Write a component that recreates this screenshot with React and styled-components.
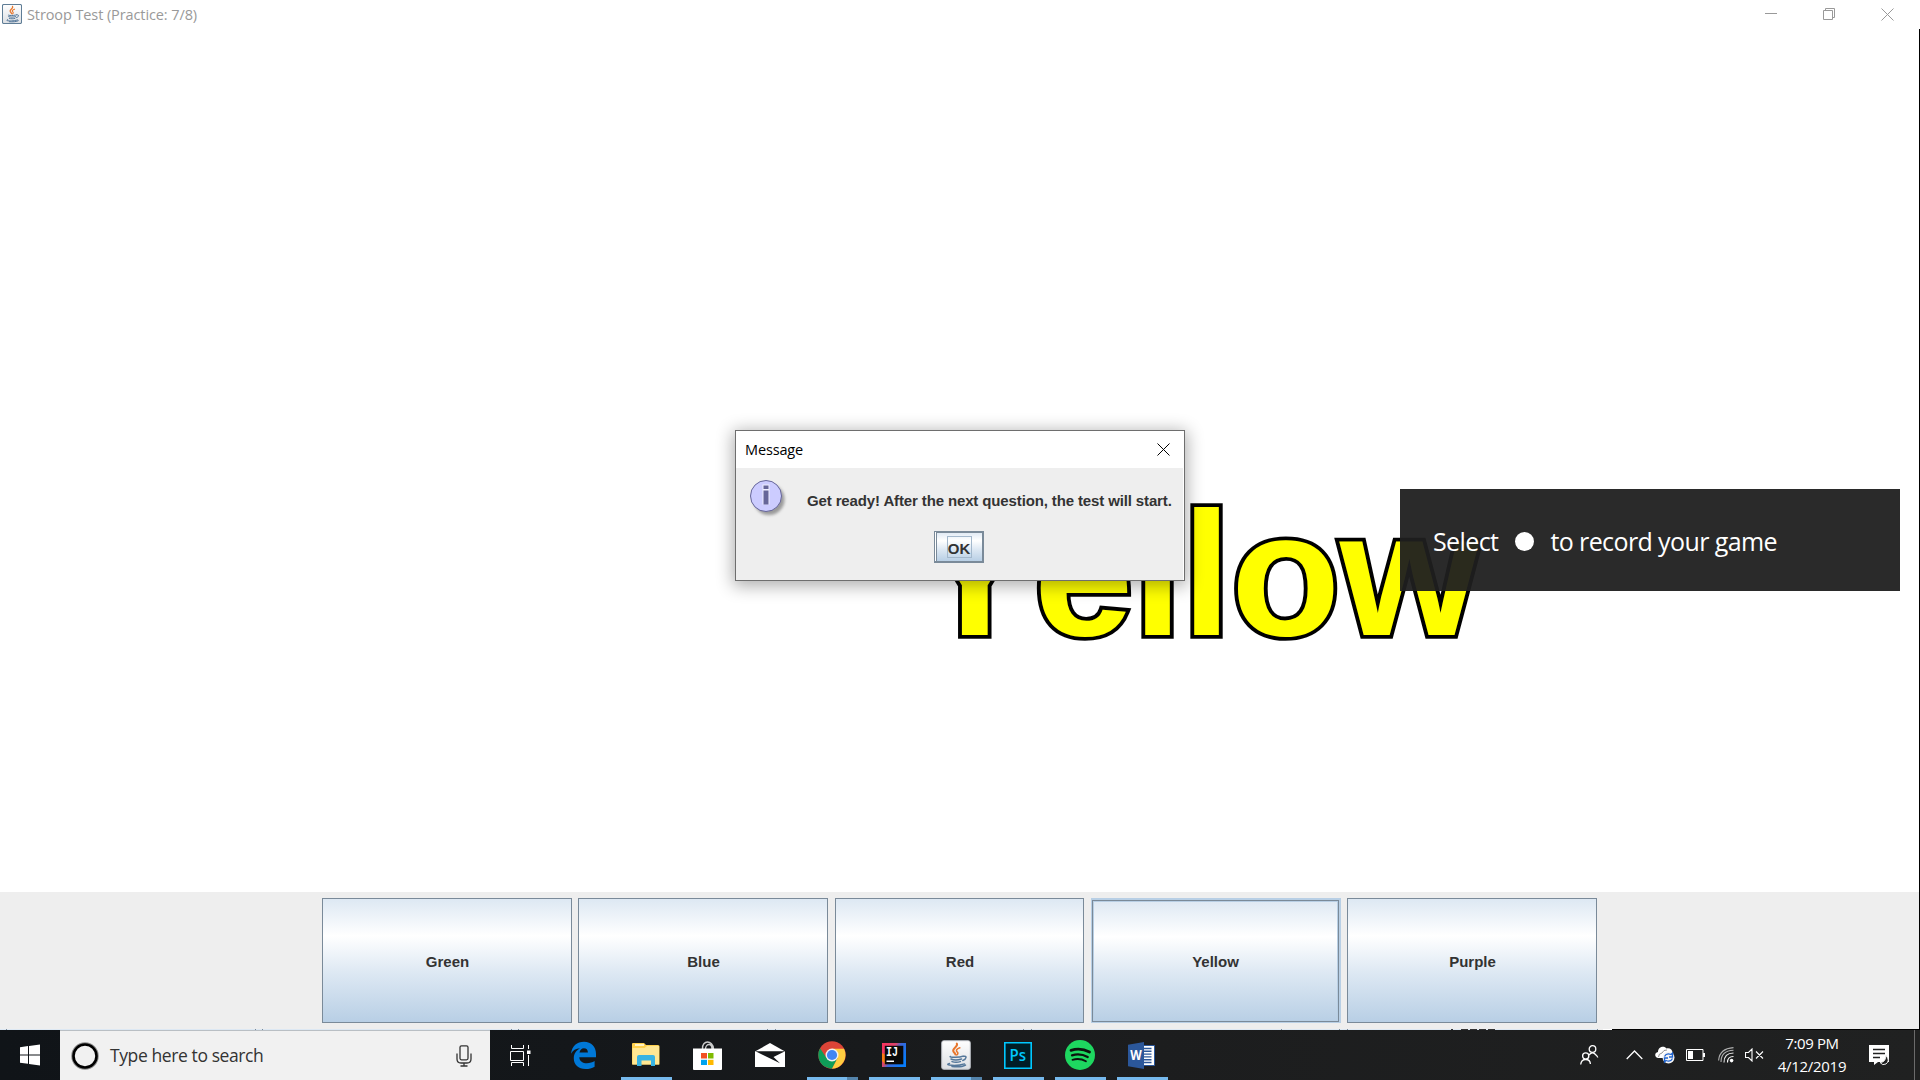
import React from 'react';
import styled, { createGlobalStyle } from 'styled-components';

const Global = createGlobalStyle`
  * { box-sizing: border-box; }
  html, body { margin: 0; padding: 0; }
  body { width: 1920px; height: 1080px; overflow: hidden; background: #fff; }
  svg { display: block; flex: none; }
`;

const UI = `'Open Sans', 'Noto Sans', sans-serif`;
const SWING = `'Liberation Sans', Arial, sans-serif`;

const Screen = styled.div`
  position: relative;
  width: 1920px;
  height: 1080px;
  display: flex;
  flex-direction: column;
  overflow: hidden;
  font-family: ${UI};
`;

const Label = styled.span`
  white-space: pre;
  font-family: ${UI};
  font-size: ${(p) => p.$size}px;
  line-height: 1.2;
  letter-spacing: ${(p) => p.$track || 0}px;
  color: ${(p) => p.$color || '#000'};
`;

const TitleBar = styled.header`
  height: 29px;
  flex: none;
  display: flex;
  align-items: flex-start;
  padding: 4px 26px 0 2px;
  background: #fff;
`;
const AppTitle = styled(Label)`
  margin: 2px auto 0 5px;
`;
const WindowControls = styled.div`
  display: flex;
  gap: 46px;
  padding-top: 4px;
`;

const Canvas = styled.main`
  height: 863px;
  flex: none;
  display: flex;
  align-items: flex-start;
  padding: 444px 0 0 915px;
  border-right: 1px solid #000;
`;
const StroopWord = styled.div`
  font: bold 179px/200px ${SWING};
  font-kerning: none;
  letter-spacing: -0.6px;
  color: #ff0;
  -webkit-text-stroke: 7.8px #000;
  paint-order: stroke fill;
  transform: scaleY(0.985);
  transform-origin: 0 162px;
`;

const AnswerBar = styled.div`
  height: 138px;
  flex: none;
  display: flex;
  flex-direction: column;
  background: #eee;
  border-right: 1px solid #000;
`;
const Answers = styled.div`
  height: 137px;
  display: grid;
  grid-template-columns: 250px 251px 250px 250px 250px;
  column-gap: 6px;
  padding: 6px 0 6px 322px;
`;
const gradient = 'linear-gradient(#dde8f3 0%, #fff 30%, #dde8f3 60%, #b8cfe5 100%)';
const Answer = styled.button`
  width: ${(p) => p.$width || 250}px;
  height: 125px;
  padding: 2px 0 0 1px;
  border: 1px solid #7a8a99;
  background: ${gradient};
  color: #333;
  font: bold 15px/18px ${SWING};
  ${(p) =>
    p.$hover &&
    `padding-top: 1px; padding-left: 0; border-color: #b8cfe5; border-width: 2px 2px 1px 1px; box-shadow: inset 0 0 0 1px #7a8a99, inset 0 0 0 2px #b8cfe5;`}
`;
const Seam = styled.div`
  height: 1px;
  flex: none;
`;

const Dialog = styled.section`
  position: absolute;
  left: 735px;
  top: 430px;
  width: 450px;
  height: 151px;
  display: flex;
  flex-direction: column;
  border: 1px solid #6e6e6e;
  background: #eee;
  box-shadow: 0 3px 16px 2px rgba(0, 0, 0, 0.32);
`;
const DialogBar = styled.div`
  height: 37px;
  display: flex;
  align-items: center;
  justify-content: space-between;
  padding: 0 14px 0 9px;
  background: #fff;
`;
const DialogBody = styled.div`
  flex: 1;
  display: flex;
  flex-direction: column;
  border-right: 1px solid #fff;
`;
const MessageRow = styled.div`
  display: flex;
  align-items: flex-start;
  height: 63px;
  padding: 11px 0 0 13px;
`;
const Message = styled.p`
  margin: 13px 0 0 22px;
  font: bold 15px/18px ${SWING};
  letter-spacing: ${(p) => p.$track}px;
  color: #333;
  white-space: pre;
`;
const OkButton = styled.button`
  width: 50px;
  height: 32px;
  margin-left: 198px;
  padding: 0 0 0 1px;
  display: flex;
  align-items: center;
  justify-content: center;
  border: solid #7a8a99;
  border-width: 1px 2px 2px 1px;
  background: linear-gradient(#dde8f3, #fff 30%, #dde8f3 60%, #b8cfe5);
  box-shadow: inset 1px 0 0 #fff, inset 2px 1px 0 #7a8a99;
`;
const OkLabel = styled.span`
  width: 25px;
  height: 22px;
  border: 1px solid #a3b8cc;
  font: bold 15px/23px ${SWING};
  color: #333;
  text-align: center;
`;

const Toast = styled.aside`
  position: absolute;
  left: 1400px;
  top: 489px;
  width: 500px;
  height: 102px;
  padding: 2px 0 0 33px;
  display: flex;
  align-items: center;
  background: rgba(31, 31, 31, 0.95);
`;
const RecordDot = styled.i`
  width: 19px;
  height: 19px;
  margin: 0 16px 0 17px;
  border-radius: 50%;
  background: #fff;
`;

const Taskbar = styled.footer`
  height: 50px;
  flex: none;
  display: flex;
  background: linear-gradient(90deg, #101418 0, #14171a 30%, #1c1d1e 60%, #202121 100%);
`;
const Start = styled.div`
  width: 60px;
  display: flex;
  align-items: center;
  justify-content: center;
`;
const Search = styled.div`
  width: 430px;
  display: flex;
  align-items: center;
  padding: 0 18px 0 11px;
  border-top: 1px solid #b9bfc4;
  background: #f1f1f1;
`;
const SearchText = styled(Label)`
  margin: -1px auto 0 11px;
`;
const TaskView = styled.div`
  width: 63px;
  display: flex;
  align-items: center;
  justify-content: center;
  padding-right: 3px;
`;
const Task = styled.div`
  width: 62px;
  display: flex;
  flex-direction: column;
  align-items: center;
`;
const TaskIcon = styled.div`
  height: 47px;
  display: flex;
  align-items: center;
  padding-top: 3px;
  padding-right: ${(p) => p.$nudge || 0}px;
`;
const Underline = styled.div`
  width: 51px;
  height: 3px;
  background: ${(p) => (p.$split ? 'linear-gradient(90deg, #76b9ed 40px, #5484ab 40px)' : '#76b9ed')};
`;
const Tray = styled.div`
  margin-left: auto;
  display: flex;
  align-items: center;
`;
const TrayIcon = styled.div`
  margin-right: ${(p) => p.$after}px;
`;
const Clock = styled.div`
  width: 70px;
  display: flex;
  flex-direction: column;
  align-items: center;
  gap: 5px;
  margin: -2px 22px 0 -1px;
`;
const ShowDesktop = styled.div`
  width: 6px;
  height: 50px;
  border-left: 1px solid #6b6b6b;
`;

const CupPaths = () => (
  <g fill="none" strokeLinecap="round">
    <path d="M15.800 3.500c2 3.200-5.200 4.600-3.400 8 .6 1 1.700 1.700 2 3" stroke="#e8762c" strokeWidth="2" />
    <path d="M18.800 7.700c-3.600 1.300-4.300 2.800-2.300 4.600.8.900.2 1.900-.7 2.600" stroke="#e8762c" strokeWidth="1.600" />
    <path d="M9.500 16.500c-2.500.8 9 1.400 12.500-.3M10 19c2.500 1 7.500.9 10.500 0M11 21.600c2.400.9 6 .8 8.400 0M22.500 16.200c3.800-.6 3 3.300-.7 4.200M8.500 23.500c-6.500 1.800 7.500 3 15 .4M11 26.600c5 .5 11 0 13.500-1.500" stroke="#54779a" strokeWidth="1.500" />
  </g>
);
const JavaIcon = ({ size }) => (
  <svg width={size} height={size} viewBox="0 0 30 30">
    <defs>
      <linearGradient id="jg" x2="0" y2="1"><stop stopColor="#fff" /><stop offset="1" stopColor="#dcdfe3" /></linearGradient>
    </defs>
    <rect x=".7" y=".7" width="28.600" height="28.600" rx="2" fill="url(#jg)" stroke={size < 25 ? '#5f7d96' : '#b8bcc2'} strokeWidth={size < 25 ? 1.600 : 1} />
    <CupPaths />
  </svg>
);
const Minimize = () => <svg width="12" height="12"><path d="M0 5.500h12" stroke="#999" /></svg>;
const Restore = () => (
  <svg width="12" height="12" fill="none" stroke="#999"><path d="M.5 2.500h9v9h-9zM2.500 2.500v-2h9v9h-2" /></svg>
);
const Close = ({ color }) => (
  <svg width="13" height="13" fill="none" stroke={color} strokeWidth="1"><path d="M.5.500l12 12M12.500.500l-12 12" /></svg>
);
const InfoIcon = () => (
  <svg width="36" height="38" style={{ overflow: 'visible' }}>
    <defs>
      <filter id="sh" x="-30%" y="-30%" width="160%" height="160%"><feGaussianBlur stdDeviation="1.600" /></filter>
    </defs>
    <circle cx="20" cy="20.500" r="15.500" fill="#777" opacity=".7" filter="url(#sh)" />
    <circle cx="17" cy="17" r="15.500" fill="#ccf" stroke="#669" />
    <path d="M13.500 5.500h7v20h-7z" fill="#eef" />
    <path d="M14.500 6.500h5v3.500h-5zM14.500 11.500h5v14h-5z" fill="#669" />
  </svg>
);
const WindowsLogo = () => (
  <svg width="20" height="22" viewBox="0 0 20 22" fill="#fff">
    <path d="M0 3.200l8-1.100v8.300H0zM9 1.900L20 .4v10H9zM0 11.400h8v8.400l-8-1.100zM9 11.400h11v10.200L9 20z" />
  </svg>
);
const Cortana = () => (
  <svg width="28" height="30" viewBox="0 0 28 30" fill="none">
    <circle cx="14" cy="15" r="12.500" stroke="#8b8b8b" strokeWidth="2.500" />
    <circle cx="14" cy="15" r="11.500" stroke="#000" strokeWidth="2.600" />
  </svg>
);
const Mic = () => (
  <svg width="16" height="22" viewBox="0 0 16 22" fill="none" stroke="#333" strokeWidth="1.300">
    <rect x="4" y=".8" width="8" height="14" rx="1.500" />
    <path d="M1 8.500v5.500q0 4 4 4h6q4 0 4-4V8.500M8 18v3M4.500 21h7" />
  </svg>
);
const TaskViewIcon = () => (
  <svg width="21" height="22" viewBox="0 0 21 22" fill="none" stroke="#fff">
    <path d="M1.500 1v3.500h12V1M.5 7.500h13v9h-13zM1.500 22v-3.500h12V22M18.500 1v4M18.500 11v11" />
    <path d="M17 6.500h3.500v3.500H17z" fill="#fff" stroke="none" />
  </svg>
);
const Edge = () => (
  <svg width="25" height="28" viewBox="0 0 25 28">
    <path fill="#0078d7" d="M0 12.800C1 5 6 .8 13 .8c7.500 0 12 5.200 12 12v3.400H8.300c.2 4 3.600 6 7.600 6 3 0 5.500-.8 7.700-2.100v5.600C21 27.200 18 28 14.600 28 7.300 28 2.800 23.800 2.800 17.500c0-4.400 2.200-8 6.200-10.200C4.800 7.500 1.800 9.500 0 12.800zM8.500 11.500h8.400c0-2.800-1.500-4.300-4-4.300-2.300 0-3.900 1.600-4.400 4.300z" />
  </svg>
);
const Explorer = () => (
  <svg width="28" height="24" viewBox="0 0 28 24">
    <path d="M0 1q0-1 1-1h11l2 2h12q1.500 0 1.500 1.500V21.500H0z" fill="#ffd04c" />
    <path d="M3 1h9v2H3z" fill="#fff3c4" />
    <path d="M.5 5h12l2.500-2H27v18.500H.5z" fill="#ffe793" />
    <path d="M5 23V14q0-2 2-2h14q2 0 2 2v9h-4v-5.500H9.500V23z" fill="#38b3e2" />
  </svg>
);
const Store = () => (
  <svg width="29" height="29" viewBox="0 0 29 29">
    <path d="M9.500 8C9 3.500 12 1 14.500 1s6 2.500 6 7M12.500 8c0-3 2-4.500 3.500-4.500S19 5 19 8" fill="none" stroke="#ccc" strokeWidth="1.400" />
    <path d="M0 7.500h29V28q0 1-1 1H1q-1 0-1-1z" fill="#fff" />
    <path d="M8 12h6v5.500H8z" fill="#f25022" /><path d="M15 12h5.500v5.500H15z" fill="#7fba00" />
    <path d="M8 18.800h6V24H8z" fill="#00a4ef" /><path d="M15 18.800h5.500V24H15z" fill="#ffb900" />
  </svg>
);
const Mail = () => (
  <svg width="30" height="24" viewBox="0 0 30 24">
    <path d="M0 8.500L15 0l15 8.500V24H0z" fill="#fff" />
    <path d="M.5 8.300H30L18.500 14l6.500 6.200L.5 8.300z" fill="#16181a" />
  </svg>
);
const Chrome = () => (
  <svg width="28" height="28" viewBox="0 0 28 28">
    <circle cx="14" cy="14" r="13.700" fill="#db4437" />
    <path d="M2.100 7.200A13.700 13.700 0 0 0 14 27.700l5.500-10.500L8.500 17z" fill="#0f9d58" />
    <path d="M26 7.800H14l5.500 9.400L14 27.700A13.700 13.700 0 0 0 26 7.800z" fill="#ffcd40" />
    <circle cx="14" cy="14" r="6.500" fill="#f1f1f1" /><circle cx="14" cy="14" r="5.100" fill="#4285f4" />
  </svg>
);
const IconText = styled.text`
  font-family: ${(p) => p.$font};
  font-size: ${(p) => p.$size}px;
  font-weight: ${(p) => p.$weight};
  fill: ${(p) => p.$fill};
`;
const IntelliJ = () => (
  <svg width="24" height="24" viewBox="0 0 24 24">
    <defs>
      <linearGradient id="ij" x2="1" y2=".6"><stop stopColor="#fe315d" /><stop offset=".45" stopColor="#d8456c" /><stop offset=".6" stopColor="#3c66d8" /><stop offset="1" stopColor="#087cfa" /></linearGradient>
    </defs>
    <path d="M0 0h24v24H0z" fill="url(#ij)" />
    <path d="M0 10l4 2v10l-4-4z" fill="#f97a12" />
    <path d="M2.800 2.800h18.500v18.500H2.800z" fill="#090909" />
    <IconText x="4" y="13" $font="'Liberation Mono', monospace" $size={12} $weight="bold" $fill="#fff" textLength="12" lengthAdjust="spacingAndGlyphs">IJ</IconText>
    <path d="M4.500 17.500h7.500v1.500H4.500z" fill="#fff" />
  </svg>
);
const Photoshop = () => (
  <svg width="28" height="27" viewBox="0 0 28 27">
    <path d="M.8.800h26.400v25.400H.8z" fill="#001d26" stroke="#00c8ff" strokeWidth="1.600" />
    <IconText x="5.500" y="18.500" $font="'Open Sans', sans-serif" $size={17} $weight={600} $fill="#00c8ff" textLength="16.500" lengthAdjust="spacingAndGlyphs">Ps</IconText>
  </svg>
);
const Spotify = () => (
  <svg width="30" height="30" viewBox="0 0 30 30">
    <circle cx="15" cy="15" r="15" fill="#1ed760" />
    <g fill="none" stroke="#0c120e" strokeLinecap="round">
      <path d="M6 10.300c6.500-1.900 13-1.200 18.500 1.800" strokeWidth="2.800" />
      <path d="M7 15.300c5.500-1.600 11-.9 15.700 1.700" strokeWidth="2.300" />
      <path d="M7.500 19.800c4.700-1.300 9.400-.8 13.400 1.500" strokeWidth="1.900" />
    </g>
  </svg>
);
const Word = () => (
  <svg width="27" height="27" viewBox="0 0 27 27">
    <path d="M15 3.500h11.500v20H15z" fill="#fff" stroke="#2b579a" />
    <path d="M16 6.500h7.500M16 9.300h7.500M16 12.100h7.500M16 14.900h7.500M16 17.700h7.500M16 20.500h7.500" stroke="#2b579a" strokeWidth="1.400" />
    <path d="M0 2.800L16 0v27L0 24.200z" fill="#2b579a" />
    <IconText x="2.200" y="18.300" $font="'Open Sans', sans-serif" $size={13.500} $weight="bold" $fill="#fff" textLength="11.500" lengthAdjust="spacingAndGlyphs">W</IconText>
  </svg>
);
const People = () => (
  <svg width="19" height="20" viewBox="0 0 19 20" fill="none" stroke="#fff" strokeWidth="1.300">
    <circle cx="12.500" cy="4" r="3.300" /><path d="M9 10q3.500-4.500 7 0 1.500 1.200 1.700 2.500" />
    <circle cx="5.700" cy="11" r="3.100" /><path d="M.7 19.500q.5-5 5-5t4.700 4.500" />
  </svg>
);
const Chevron = () => <svg width="17" height="10" fill="none" stroke="#fff" strokeWidth="1.300"><path d="M.7 9l7.800-8 7.800 8" /></svg>;
const Cloud = () => (
  <svg width="20" height="18" viewBox="0 0 20 18">
    <path d="M3.500 12C-.8 12-.8 6.500 3 6 3 1 9-.8 11.500 2.500 15 1.500 18 4 17.500 8v4z" fill="#fff" />
    <path d="M3.500 11q0-3.500 3.500-4 1.500-3.500 5-3" fill="none" stroke="#777" strokeWidth=".8" />
    <circle cx="13.500" cy="11.500" r="6" fill="#f4f4f4" />
    <path d="M9.500 10.500q2-4 6.500-2l1.500-1.500v4H14M17.500 12.500q-2 4-6.500 2l-1.500 1.500v-4H13" fill="none" stroke="#1e63d0" strokeWidth="1.300" />
  </svg>
);
const Battery = () => (
  <svg width="19" height="12"><path d="M.5.500h16.500v11H.5z" fill="none" stroke="#fff" /><path d="M2 2h5v8H2zM17 4h2v4h-2z" fill="#fff" /></svg>
);
const Wifi = () => (
  <svg width="16" height="16" fill="none" stroke="#fff" strokeWidth="1.100">
    <circle cx="13.600" cy="13.600" r="1.800" fill="#fff" stroke="none" />
    <path d="M9.500 15.500q0-6 6-6" /><path d="M6 15.500Q6 6 15.500 6" strokeOpacity=".9" />
    <path d="M3 15Q3 3.500 15.500 3.200M.6 13.500Q1.500 1.500 15.500.6" strokeOpacity=".65" />
  </svg>
);
const Mute = () => (
  <svg width="19" height="14" fill="none" stroke="#fff"><path d="M.5 4.500h3L7 1v12L3.500 9.500h-3zM11 3.500l7 7M18 3.500l-7 7" strokeWidth="1.100" /></svg>
);
const Notifications = () => (
  <svg width="21" height="21" viewBox="0 0 21 21">
    <path d="M0 0h20v17H9l-4 3v-3H0z" fill="#fff" />
    <path d="M4 4.500h12M4 8.500h12M4 12.500h7" stroke="#202121" strokeWidth="1.300" />
    <path d="M17 10.500q4.500 5 0 8.500-3.500 2-6-1.500 5.500 0 6-7z" fill="#202121" stroke="#eee" />
  </svg>
);

const tasks = [
  { name: 'edge', icon: <Edge />, nudge: 2 },
  { name: 'explorer', icon: <Explorer />, open: true },
  { name: 'store', icon: <Store />, nudge: 2 },
  { name: 'mail', icon: <Mail /> },
  { name: 'chrome', icon: <Chrome />, open: true, split: true },
  { name: 'intellij', icon: <IntelliJ />, open: true },
  { name: 'java', icon: <JavaIcon size={30} />, open: true, split: true },
  { name: 'photoshop', icon: <Photoshop />, open: true },
  { name: 'spotify', icon: <Spotify />, open: true },
  { name: 'word', icon: <Word />, open: true, nudge: 1 },
];
const answers = [
  { name: 'Green' },
  { name: 'Blue' },
  { name: 'Red', width: 249 },
  { name: 'Yellow', hover: true },
  { name: 'Purple' },
];

const SeamLine = () => (
  <Seam>
    <svg width="1920" height="1">
      <path d="M0 .5h1597" stroke="#dde8f3" />
      <path d="M1603 .5h9" stroke="#fff" />
      <path d="M1612 .5h308" stroke="#000" />
      {[6, 255, 262, 511, 518, 767, 775, 1023, 1031, 1281, 1339, 1347, 1597].map((x) => (
        <path key={x} d={`M${x} .5h1`} stroke="#7a8a99" />
      ))}
      <path d="M1451 .5h2M1461 .5h7M1470 .5h7M1479 .5h7M1488 .5h7" stroke="#333" />
    </svg>
  </Seam>
);

export default function App() {
  return (
    <Screen>
      <Global />
      <TitleBar>
        <JavaIcon size={20} />
        <AppTitle $size={14.5} $track={-0.1} $color="#999">Stroop Test (Practice: 7/8)</AppTitle>
        <WindowControls><Minimize /><Restore /><Close color="#999" /></WindowControls>
      </TitleBar>
      <Canvas>
        <StroopWord>Yellow</StroopWord>
      </Canvas>
      <AnswerBar>
        <Answers>
          {answers.map((a) => (
            <Answer key={a.name} $hover={a.hover} $width={a.width}>{a.name}</Answer>
          ))}
        </Answers>
        <SeamLine />
      </AnswerBar>
      <Taskbar>
        <Start><WindowsLogo /></Start>
        <Search>
          <Cortana />
          <SearchText $size={17.5} $track={-0.4} $color="#333">Type here to search</SearchText>
          <Mic />
        </Search>
        <TaskView><TaskViewIcon /></TaskView>
        {tasks.map((t) => (
          <Task key={t.name}>
            <TaskIcon $nudge={t.nudge}>{t.icon}</TaskIcon>
            {t.open && <Underline $split={t.split} />}
          </Task>
        ))}
        <Tray>
          <TrayIcon $after={27}><People /></TrayIcon>
          <TrayIcon $after={12}><Chevron /></TrayIcon>
          <TrayIcon $after={11}><Cloud /></TrayIcon>
          <TrayIcon $after={13}><Battery /></TrayIcon>
          <TrayIcon $after={11}><Wifi /></TrayIcon>
          <TrayIcon $after={14}><Mute /></TrayIcon>
          <Clock>
            <Label $size={15} $track={-0.4} $color="#fff">7:09 PM</Label>
            <Label $size={15} $track={-0.3} $color="#fff">4/12/2019</Label>
          </Clock>
          <TrayIcon $after={24}><Notifications /></TrayIcon>
          <ShowDesktop />
        </Tray>
      </Taskbar>
      <Dialog>
        <DialogBar>
          <Label $size={14.5} $track={-0.15}>Message</Label>
          <Close color="#000" />
        </DialogBar>
        <DialogBody>
          <MessageRow>
            <InfoIcon />
            <Message $track={-0.13}>Get ready! After the next question, the test will start.</Message>
          </MessageRow>
          <OkButton><OkLabel>OK</OkLabel></OkButton>
        </DialogBody>
      </Dialog>
      <Toast>
        <Label $size={25} $track={-0.6} $color="#fff">Select</Label>
        <RecordDot />
        <Label $size={25} $track={-0.6} $color="#fff">to record your game</Label>
      </Toast>
    </Screen>
  );
}
